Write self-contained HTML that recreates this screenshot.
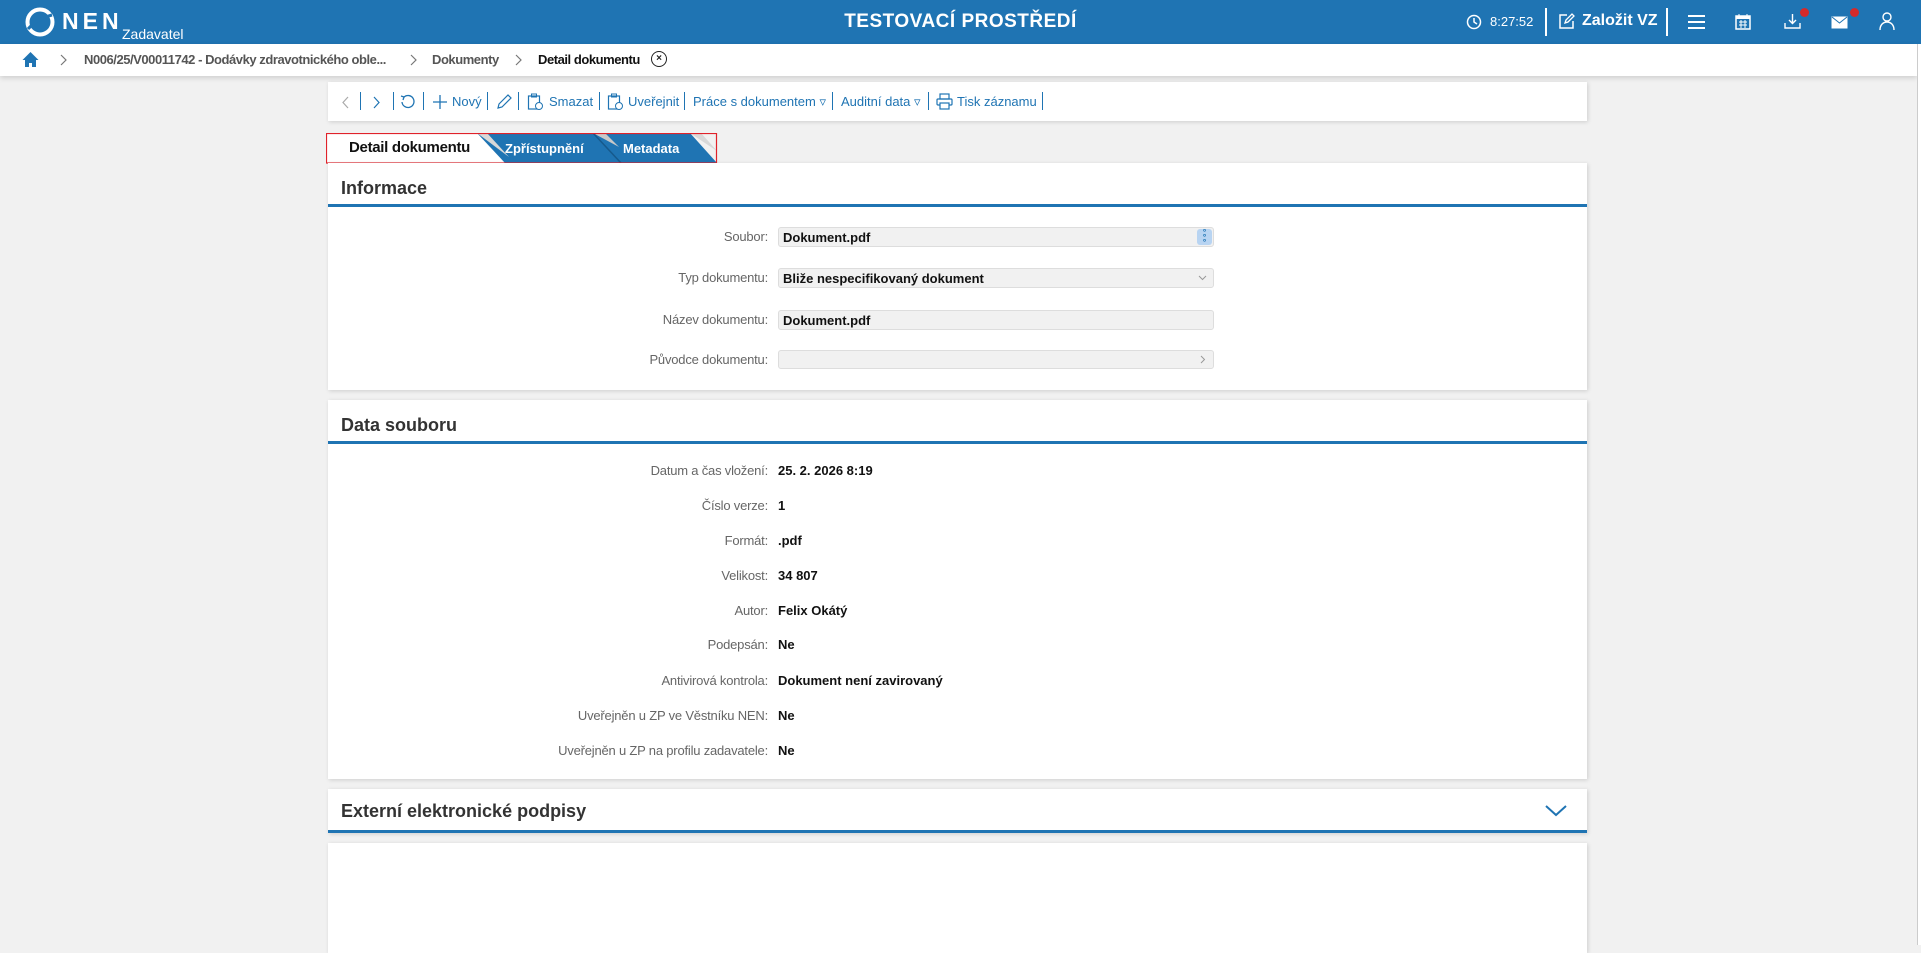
<!DOCTYPE html>
<html><head><meta charset="utf-8">
<style>
*{box-sizing:border-box;margin:0;padding:0}
body{width:1921px;height:945px;overflow:hidden;background:#f1f1f1;font-family:"Liberation Sans",Arial,sans-serif;position:relative;color:#222}
.hdr{position:absolute;left:0;top:0;width:1921px;height:44px;background:#1f74b3;color:#fff}
.bc{position:absolute;left:0;top:44px;width:1917px;height:32px;background:#fff;box-shadow:0 2px 5px rgba(0,0,0,.15);font-size:13px;font-weight:bold;color:#555;letter-spacing:-0.45px}
.abs{position:absolute}
.panel{position:absolute;left:328px;width:1259px;background:#fff;box-shadow:1px 1px 4px rgba(0,0,0,.15)}
.ptitle{position:absolute;left:13px;font-size:18px;font-weight:bold;color:#333}
.pline{position:absolute;left:0;width:100%;height:3px;background:#1f74b3}
.lbl{position:absolute;right:1153px;font-size:13px;color:#666;text-align:right;white-space:nowrap;letter-spacing:-0.2px}
.val{position:absolute;left:778px;font-size:13px;font-weight:bold;color:#111;white-space:nowrap}
.inp{position:absolute;left:778px;width:436px;height:20px;background:#f1f1f1;border:1px solid #ddd;border-radius:3px;font-size:13px;font-weight:bold;padding:2px 4px;color:#111}
.tb{position:absolute;top:94px;font-size:13px;color:#1f74b3;white-space:nowrap}
.sep{position:absolute;top:92px;width:1px;height:18px;background:#1f74b3}
</style></head><body>
<div class="hdr">
 <svg class="abs" style="left:25px;top:7px" width="30" height="30" viewBox="0 0 30 30"><circle cx="15" cy="15" r="12.5" fill="none" stroke="#fff" stroke-width="4"/><path d="M3 22 Q12 12 27 8" stroke="#1f74b3" stroke-width="3" fill="none"/></svg>
 <div class="abs" style="left:62px;top:8px;font-size:23px;font-weight:bold;letter-spacing:4px">NEN</div>
 <div class="abs" style="left:122px;top:26px;font-size:14px">Zadavatel</div>
 <div class="abs" style="left:0;width:1921px;top:11px;text-align:center;font-size:19px;font-weight:bold;letter-spacing:0.5px">TESTOVACÍ PROSTŘEDÍ</div>
 <svg class="abs" style="left:1466px;top:14px" width="16" height="16" viewBox="0 0 16 16"><circle cx="8" cy="8" r="6.5" fill="none" stroke="#fff" stroke-width="1.5"/><path d="M8 4v4l3 2" stroke="#fff" stroke-width="1.5" fill="none"/></svg>
 <div class="abs" style="left:1490px;top:14px;font-size:13px">8:27:52</div>
 <div class="abs" style="left:1545px;top:8px;width:2px;height:28px;background:#fff"></div>
 <svg class="abs" style="left:1558px;top:13px" width="17" height="17" viewBox="0 0 17 17"><path d="M9 2H2v13h13V8" fill="none" stroke="#fff" stroke-width="1.5"/><path d="M7 10l1-3 6-6 2 2-6 6z" fill="none" stroke="#fff" stroke-width="1.3"/></svg>
 <div class="abs" style="left:1582px;top:12px;font-size:16px;font-weight:bold">Založit VZ</div>
 <div class="abs" style="left:1666px;top:8px;width:2px;height:28px;background:#fff"></div>
 <svg class="abs" style="left:1688px;top:15px" width="17" height="14"><path d="M0 1h17M0 7h17M0 13h17" stroke="#fff" stroke-width="2"/></svg>
 <svg class="abs" style="left:1735px;top:13px" width="16" height="17" viewBox="0 0 16 17"><rect x="1" y="3" width="14" height="13" fill="none" stroke="#fff" stroke-width="1.5"/><rect x="1" y="3" width="14" height="3" fill="#fff"/><path d="M4 1v3M12 1v3M4 9h8M4 12h8M6 7v8M10 7v8" stroke="#fff"/></svg>
 <svg class="abs" style="left:1784px;top:13px" width="17" height="17" viewBox="0 0 17 17"><path d="M8.5 1v9M5 7l3.5 3.5L12 7M1 10v5h15v-5" fill="none" stroke="#fff" stroke-width="1.4"/></svg>
 <div class="abs" style="left:1800px;top:8px;width:9px;height:9px;border-radius:50%;background:#d42a2a"></div>
 <svg class="abs" style="left:1831px;top:16px" width="17" height="13"><rect x="0.5" y="0.5" width="16" height="12" fill="#fff"/><path d="M1 1l7.5 6L16 1" stroke="#1f74b3" fill="none"/></svg>
 <div class="abs" style="left:1850px;top:8px;width:9px;height:9px;border-radius:50%;background:#d42a2a"></div>
 <svg class="abs" style="left:1879px;top:12px" width="16" height="18" viewBox="0 0 16 18"><circle cx="8" cy="5" r="4" fill="none" stroke="#fff" stroke-width="1.4"/><path d="M1 18c0-5 3-8 7-8s7 3 7 8" fill="none" stroke="#fff" stroke-width="1.4"/></svg>
</div>
<div class="bc">
 <svg class="abs" style="left:22px;top:7px" width="17" height="17" viewBox="0 0 17 17"><path d="M8.5 1L0.5 9h2.5v7h4v-4h3v4h4V9h2.5z" fill="#1f74b3"/></svg>
 <svg class="abs" style="left:60px;top:10px" width="7" height="12"><path d="M1 1l5 5-5 5" fill="none" stroke="#777" stroke-width="1.2"/></svg>
 <div class="abs" style="left:84px;top:8px">N006/25/V00011742 - Dodávky zdravotnického oble...</div>
 <svg class="abs" style="left:410px;top:10px" width="7" height="12"><path d="M1 1l5 5-5 5" fill="none" stroke="#777" stroke-width="1.2"/></svg>
 <div class="abs" style="left:432px;top:8px">Dokumenty</div>
 <svg class="abs" style="left:515px;top:10px" width="7" height="12"><path d="M1 1l5 5-5 5" fill="none" stroke="#777" stroke-width="1.2"/></svg>
 <div class="abs" style="left:538px;top:8px;color:#111">Detail dokumentu</div>
 <div class="abs" style="left:651px;top:7px;width:16px;height:16px;border:1.5px solid #222;border-radius:50%;font-size:10px;line-height:13px;text-align:center;color:#222;letter-spacing:0">×</div>
</div>
<!-- toolbar -->
<div class="panel" style="top:82px;height:39px"></div>
<svg class="abs" style="left:342px;top:96px" width="7" height="13"><path d="M6 1L1 6.5 6 12" fill="none" stroke="#aaa" stroke-width="1.2"/></svg>
<div class="sep" style="left:360px"></div>
<svg class="abs" style="left:373px;top:96px" width="7" height="13"><path d="M1 1l5 5.5L1 12" fill="none" stroke="#1f74b3" stroke-width="1.2"/></svg>
<div class="sep" style="left:393px"></div>
<svg class="abs" style="left:400px;top:94px" width="16" height="16" viewBox="0 0 16 16"><path d="M4 3a6 6 0 1 1-2 5" fill="none" stroke="#1f74b3" stroke-width="1.3"/><path d="M1 2l3 1-1 3" fill="none" stroke="#1f74b3" stroke-width="1.3"/></svg>
<div class="sep" style="left:423px"></div>
<svg class="abs" style="left:433px;top:95px" width="14" height="14"><path d="M7 0v14M0 7h14" stroke="#1f74b3" stroke-width="1.3"/></svg>
<div class="tb" style="left:452px">Nový</div>
<div class="sep" style="left:487px"></div>
<svg class="abs" style="left:496px;top:93px" width="16" height="17" viewBox="0 0 16 17"><path d="M2 15l1-4 9-9 3 3-9 9z" fill="none" stroke="#1f74b3" stroke-width="1.2"/></svg>
<div class="sep" style="left:518px"></div>
<svg class="abs" style="left:527px;top:93px" width="17" height="18" viewBox="0 0 17 18"><rect x="1.5" y="3" width="11" height="13" fill="none" stroke="#1f74b3" stroke-width="1.2"/><rect x="4.5" y="1" width="5" height="3" fill="none" stroke="#1f74b3"/><circle cx="12" cy="13" r="3.5" fill="#fff" stroke="#1f74b3"/></svg>
<div class="tb" style="left:549px">Smazat</div>
<div class="sep" style="left:599px"></div>
<svg class="abs" style="left:607px;top:93px" width="17" height="18" viewBox="0 0 17 18"><rect x="1.5" y="3" width="11" height="13" fill="none" stroke="#1f74b3" stroke-width="1.2"/><rect x="4.5" y="1" width="5" height="3" fill="none" stroke="#1f74b3"/><circle cx="12" cy="13" r="3.5" fill="#fff" stroke="#1f74b3"/></svg>
<div class="tb" style="left:628px">Uveřejnit</div>
<div class="sep" style="left:684px"></div>
<div class="tb" style="left:693px">Práce s dokumentem ▿</div>
<div class="sep" style="left:832px"></div>
<div class="tb" style="left:841px">Auditní data ▿</div>
<div class="sep" style="left:928px"></div>
<svg class="abs" style="left:936px;top:93px" width="17" height="17" viewBox="0 0 17 17"><rect x="4" y="1" width="9" height="5" fill="none" stroke="#1f74b3" stroke-width="1.2"/><rect x="1" y="6" width="15" height="6" rx="1" fill="none" stroke="#1f74b3" stroke-width="1.2"/><rect x="4" y="10" width="9" height="6" fill="#fff" stroke="#1f74b3" stroke-width="1.2"/></svg>
<div class="tb" style="left:957px">Tisk záznamu</div>
<div class="sep" style="left:1042px"></div>
<!-- tabs -->
<svg class="abs" style="left:326px;top:133px" width="400" height="31" viewBox="0 0 400 31">
 <rect x="151" y="0" width="245" height="30" fill="#1f74b3"/>
 <path d="M0 0H151L179 30H0Z" fill="#fff"/>
 <path d="M151 0h10l22 24z" fill="#d8d8d8"/>
 <path d="M267 0h12l14 14z" fill="#c8c8c8"/>
 <path d="M267 0L295 30" stroke="#16598c" stroke-width="1.5"/>
 <path d="M364 0H396V30H391Z" fill="#f1f1f1"/>
 <path d="M364 0h11l16 18z" fill="#d8d8d8"/>
 <rect x="0.5" y="0.5" width="390" height="29.5" fill="none" stroke="#e0222a" stroke-width="1.2"/>
</svg>
<div class="abs" style="left:349px;top:139px;font-size:15px;font-weight:bold;color:#111;letter-spacing:-0.3px">Detail dokumentu</div>
<div class="abs" style="left:505px;top:141px;font-size:13px;font-weight:bold;color:#fff">Zpřístupnění</div>
<div class="abs" style="left:623px;top:141px;font-size:13px;font-weight:bold;color:#fff">Metadata</div>
<!-- Informace -->
<div class="panel" style="top:163px;height:227px">
 <div class="ptitle" style="top:15px">Informace</div>
 <div class="pline" style="top:41px"></div>
</div>
<div class="lbl" style="top:229px">Soubor:</div>
<div class="inp" style="top:227px">Dokument.pdf<div class="abs" style="right:1px;top:1px;width:15px;height:16px;background:#b8d4f2;border-radius:3px;font-size:9px;line-height:5px;color:#1f74b3;text-align:center;padding-top:1px">°<br>°<br>°</div></div>
<div class="lbl" style="top:270px">Typ dokumentu:</div>
<div class="inp" style="top:268px">Bliže nespecifikovaný dokument<svg class="abs" style="right:6px;top:6px" width="9" height="6"><path d="M1 1l3.5 3.5L8 1" fill="none" stroke="#999"/></svg></div>
<div class="lbl" style="top:312px">Název dokumentu:</div>
<div class="inp" style="top:310px">Dokument.pdf</div>
<div class="lbl" style="top:352px">Původce dokumentu:</div>
<div class="inp" style="top:350px;height:19px"><svg class="abs" style="right:7px;top:4px" width="6" height="9"><path d="M1 1l3.5 3.5L1 8" fill="none" stroke="#999"/></svg></div>
<!-- Data souboru -->
<div class="panel" style="top:400px;height:379px">
 <div class="ptitle" style="top:15px">Data souboru</div>
 <div class="pline" style="top:41px"></div>
</div>
<div class="lbl" style="top:463px">Datum a čas vložení:</div><div class="val" style="top:463px">25. 2. 2026 8:19</div>
<div class="lbl" style="top:498px">Číslo verze:</div><div class="val" style="top:498px">1</div>
<div class="lbl" style="top:533px">Formát:</div><div class="val" style="top:533px">.pdf</div>
<div class="lbl" style="top:568px">Velikost:</div><div class="val" style="top:568px">34 807</div>
<div class="lbl" style="top:603px">Autor:</div><div class="val" style="top:603px">Felix Okátý</div>
<div class="lbl" style="top:637px">Podepsán:</div><div class="val" style="top:637px">Ne</div>
<div class="lbl" style="top:673px">Antivirová kontrola:</div><div class="val" style="top:673px">Dokument není zavirovaný</div>
<div class="lbl" style="top:708px">Uveřejněn u ZP ve Věstníku NEN:</div><div class="val" style="top:708px">Ne</div>
<div class="lbl" style="top:743px">Uveřejněn u ZP na profilu zadavatele:</div><div class="val" style="top:743px">Ne</div>
<!-- Externí -->
<div class="panel" style="top:789px;height:44px">
 <div class="ptitle" style="top:12px">Externí elektronické podpisy</div>
 <div class="pline" style="top:41px"></div>
 <svg class="abs" style="left:1217px;top:16px" width="22" height="12"><path d="M1 1l10 9 10-9" fill="none" stroke="#1f74b3" stroke-width="2"/></svg>
</div>
<div class="panel" style="top:843px;height:110px"></div>
<div class="abs" style="left:1918px;top:44px;width:3px;height:901px;background:#fff"></div>
<div class="abs" style="left:1917px;top:44px;width:1px;height:901px;background:#ccc"></div>
</body></html>
